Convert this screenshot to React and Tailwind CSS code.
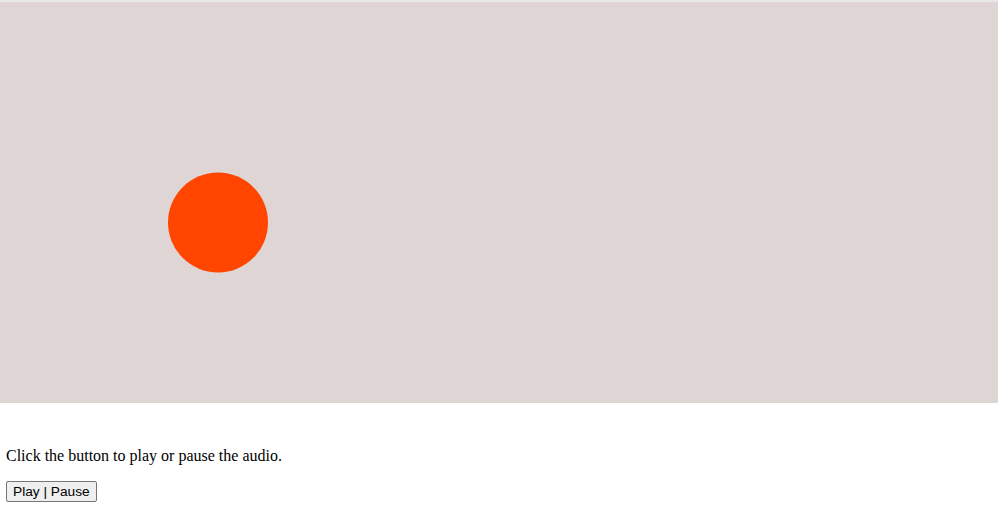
export default function App() {
    return (
        <div className="min-h-[509px] bg-white" style={{ fontFamily: '"Liberation Serif", serif' }}>
            <div className="h-[2px] bg-[#e8e8e8]" />
            <svg className="block w-full h-[401px]" viewBox="0 0 998 401" preserveAspectRatio="none">
                <rect x="0" y="0" width="998" height="401" fill="#e0d5d5" />
                <circle cx="218" cy="220.5" r="50" fill="#ff4500" />
            </svg>

            <div className="pl-[6px] pt-[44px]">
                <p className="text-[16px] leading-[18px] text-black">
                    Click the button to play or pause the audio.
                </p>
                <button
                    className="mt-[16px] h-[21px] px-[6px] text-[13.7px] leading-[17px] text-black bg-[#efefef] border border-[#767676] rounded-[2px]"
                    style={{ fontFamily: '"Liberation Sans", Arial, sans-serif' }}
                >
                    Play | Pause
                </button>
            </div>
        </div>
    );
}
